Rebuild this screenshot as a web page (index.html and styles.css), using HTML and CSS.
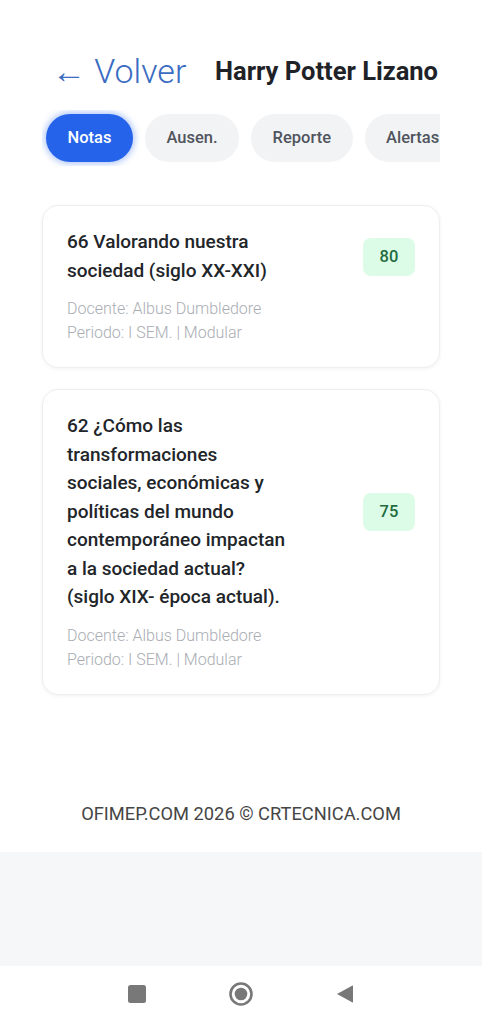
FILE: index.html
```html
<!DOCTYPE html>
<html lang="es">
<head>
<meta charset="utf-8">
<meta name="viewport" content="width=device-width, initial-scale=1">
<title>Notas</title>
<link rel="stylesheet" href="styles.css">
</head>
<body>
<div class="app">
  <header class="header">
    <a class="back">← Volver</a>
    <h1 class="student">Harry Potter Lizano</h1>
  </header>
  <nav class="tabs">
    <span class="tab active">Notas</span>
    <span class="tab">Ausen.</span>
    <span class="tab">Reporte</span>
    <span class="tab">Alertas</span>
  </nav>
  <section class="cards">
    <article class="card">
      <div class="card-row">
        <div class="card-title">66 Valorando nuestra sociedad (siglo XX-XXI)</div>
        <span class="badge">80</span>
      </div>
      <div class="meta">Docente: Albus Dumbledore</div>
      <div class="meta">Periodo: I SEM. | Modular</div>
    </article>
    <article class="card">
      <div class="card-row">
        <div class="card-title">62 ¿Cómo las transformaciones sociales, económicas y políticas del mundo contemporáneo impactan a la sociedad actual? (siglo XIX- época actual).</div>
        <span class="badge">75</span>
      </div>
      <div class="meta">Docente: Albus Dumbledore</div>
      <div class="meta">Periodo: I SEM. | Modular</div>
    </article>
  </section>
  <footer class="footer">OFIMEP.COM 2026 © CRTECNICA.COM</footer>
</div>
<div class="gray"></div>
<div class="navbar">
  <span class="nav-cell"><svg width="18" height="18" viewBox="0 0 18 18"><rect x="0" y="0" width="18" height="18" rx="2.5" fill="#787878"/></svg></span>
  <span class="nav-cell"><svg width="26" height="26" viewBox="0 0 26 26"><circle cx="13" cy="13" r="10.5" fill="none" stroke="#787878" stroke-width="2.6"/><circle cx="13" cy="13" r="6.3" fill="#787878"/></svg></span>
  <span class="nav-cell"><svg width="18" height="20" viewBox="0 0 18 20"><path d="M1 10 L16.5 1.5 Q17 1.3 17 2 L17 18 Q17 18.7 16.5 18.5 Z" fill="#787878"/></svg></span>
</div>
</body>
</html>
```

FILE: styles.css
```css
* { box-sizing: border-box; }
html, body { margin: 0; padding: 0; }
body {
  width: 482px;
  height: 1024px;
  display: flex;
  flex-direction: column;
  font-family: Roboto, "Noto Sans", "Liberation Sans", sans-serif;
  background: #ffffff;
  overflow: hidden;
}
.app {
  height: 852px;
  background: #ffffff;
  padding: 51px 42px 0 42px;
  flex: none;
}
.header {
  display: flex;
  align-items: center;
  justify-content: space-between;
  padding: 0 2px 0 10px;
  height: 40px;
}
.back {
  font-size: 34px;
  font-weight: 300;
  color: #3a6cc2;
  line-height: 40px;
  text-decoration: none;
}
.student {
  margin: 0;
  font-size: 25.5px;
  font-weight: 700;
  color: #1f2328;
  line-height: 40px;
}
.tabs {
  margin-top: 19px;
  display: flex;
  gap: 12px;
  overflow: hidden;
  padding: 4px 0 4px 4px;
  width: 398px;
}
.tab {
  flex: none;
  height: 48px;
  line-height: 48px;
  padding: 0 21.5px;
  border-radius: 24px;
  background: #f2f3f5;
  color: #50555d;
  font-size: 16.5px;
  font-weight: 500;
}
.tab.active {
  background: #2563eb;
  color: #ffffff;
  box-shadow: 0 0 6px 2px rgba(37, 99, 235, 0.35);
}
.cards {
  margin-top: 39px;
  display: flex;
  flex-direction: column;
  gap: 21px;
}
.card {
  border: 1px solid #eceef1;
  border-radius: 16px;
  background: #ffffff;
  box-shadow: 0 1px 4px rgba(0, 0, 0, 0.05);
  padding: 22px 24px 22px 24px;
}
.card-row {
  display: flex;
  align-items: center;
  justify-content: space-between;
}
.card-title {
  width: 225px;
  font-size: 19px;
  font-weight: 500;
  line-height: 28.5px;
  color: #222529;
}
.badge {
  flex: none;
  width: 52px;
  height: 38px;
  line-height: 38px;
  text-align: center;
  border-radius: 8px;
  background: #dcfce7;
  color: #1f6b3d;
  font-size: 16.5px;
  font-weight: 500;
}
.card-row + .meta { margin-top: 12px; }
.meta {
  font-size: 16px;
  line-height: 24px;
  font-weight: 300;
  color: #a9adb3;
}
.footer {
  margin-top: 107px;
  text-align: center;
  font-size: 18.3px;
  line-height: 24px;
  color: #454545;
}
.gray {
  height: 114px;
  background: #f6f7f9;
  flex: none;
}
.navbar {
  flex: 1;
  background: #ffffff;
  display: flex;
  justify-content: center;
  align-items: center;
  padding-bottom: 2px;
}
.nav-cell {
  width: 104px;
  display: flex;
  justify-content: center;
  align-items: center;
}
.nav-cell svg { display: block; }
```
